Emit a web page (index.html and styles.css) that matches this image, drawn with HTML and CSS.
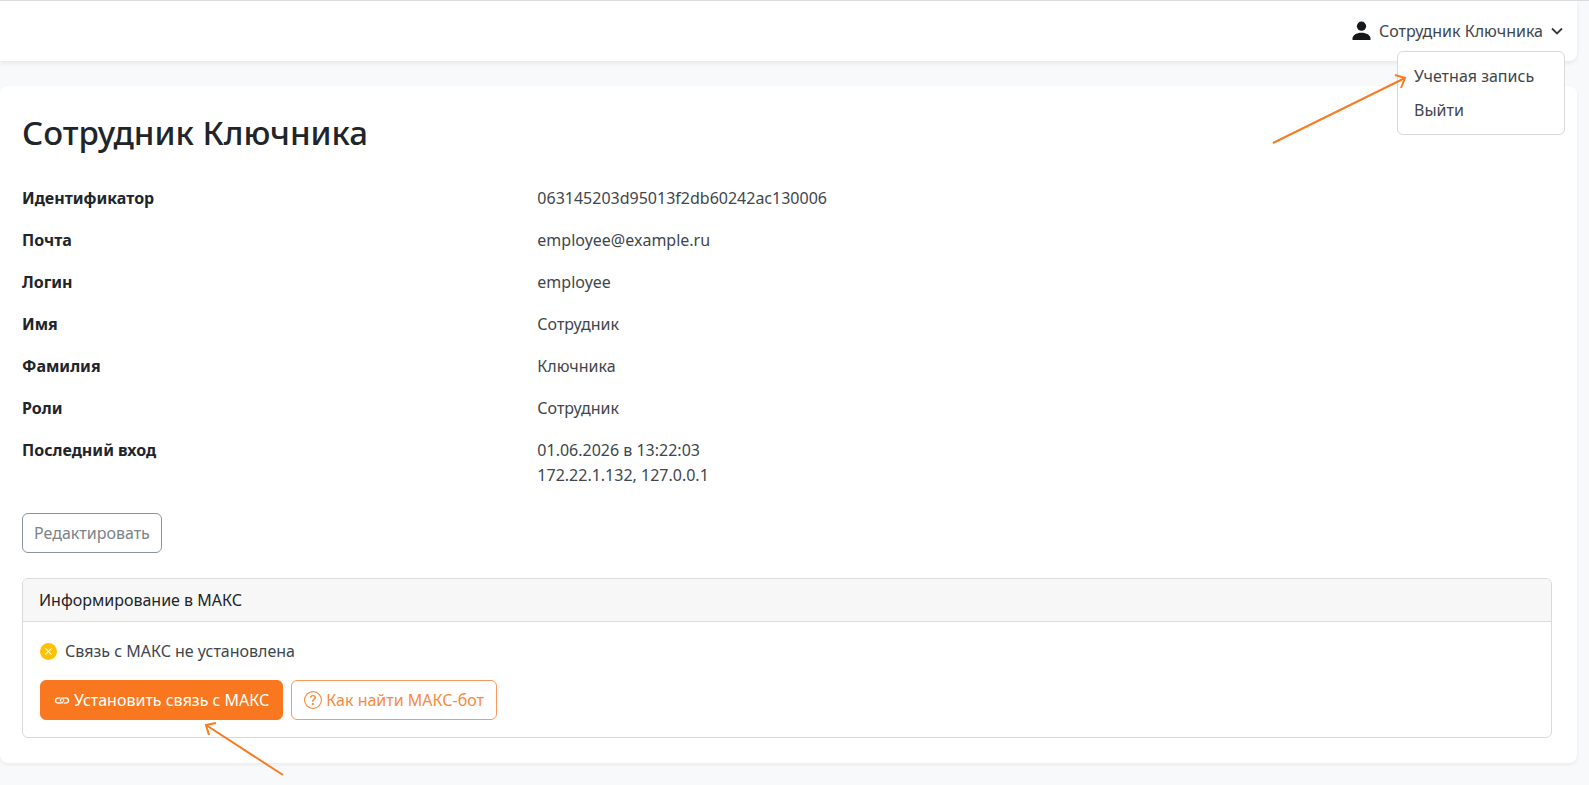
FILE: index.html
```html
<!DOCTYPE html>
<html lang="ru">
<head>
<meta charset="utf-8">
<title>Сотрудник Ключника</title>
<link rel="stylesheet" href="styles.css">
</head>
<body>
<header class="topbar">
  <div class="user-menu">
    <button class="user-toggle" type="button" aria-expanded="true">
      <svg class="user-icon" viewBox="0 0 18 20" aria-hidden="true"><circle cx="9" cy="5.2" r="4.6"/><path d="M0 19v-1.6c0-3.2 4.2-5.6 9-5.6s9 2.400 9 5.600V19z"/></svg>
      <span>Сотрудник Ключника</span>
      <svg class="chevron" viewBox="0 0 12 12" aria-hidden="true"><path d="M1 3.500l5 5 5-5"/></svg>
    </button>
    <nav class="menu">
      <a class="menu-item" href="#">Учетная запись</a>
      <a class="menu-item" href="#">Выйти</a>
    </nav>
    <svg class="arrow arrow-account" viewBox="0 0 136 72" aria-hidden="true"><path d="M2 69L134 4M124 1l10 3-4 10"/></svg>
  </div>
</header>
<main class="panel">
  <h1 class="title">Сотрудник Ключника</h1>
  <dl class="details">
    <dt>Идентификатор</dt><dd>063145203d95013f2db60242ac130006</dd>
    <dt>Почта</dt><dd>employee@example.ru</dd>
    <dt>Логин</dt><dd>employee</dd>
    <dt>Имя</dt><dd>Сотрудник</dd>
    <dt>Фамилия</dt><dd>Ключника</dd>
    <dt>Роли</dt><dd>Сотрудник</dd>
    <dt>Последний вход</dt><dd>01.06.2026 в 13:22:03<br>172.22.1.132, 127.0.0.1</dd>
  </dl>
  <button class="btn btn-secondary" type="button">Редактировать</button>
  <section class="card">
    <h2 class="card-header">Информирование в МАКС</h2>
    <div class="card-body">
      <p class="status">
        <svg class="status-icon" viewBox="0 0 16 16" aria-hidden="true"><circle cx="8" cy="8" r="8"/><path d="M5 5l6 6M11 5l-6 6"/></svg>
        Связь с МАКС не установлена
      </p>
      <div class="actions">
        <div class="link-action">
          <button class="btn btn-primary" type="button">
            <svg class="link-icon" viewBox="0 0 16 16" aria-hidden="true"><path d="M6.354 5.500H4a3 3 0 0 0 0 6h3a3 3 0 0 0 2.830-4H9q-.13 0-.25.031A2 2 0 0 1 7 10.500H4a2 2 0 1 1 0-4h1.535c.218-.376.495-.714.820-1z"/><path d="M9 5.500a3 3 0 0 0-2.830 4h1.098A2 2 0 0 1 9 6.500h3a2 2 0 1 1 0 4h-1.535a4 4 0 0 1-.820 1H12a3 3 0 1 0 0-6z"/></svg>
            Установить связь с МАКС
          </button>
          <svg class="arrow arrow-link" viewBox="0 0 82 56" aria-hidden="true"><path d="M80 53L3 3M13 1L3 3l3 10"/></svg>
        </div>
        <button class="btn btn-outline" type="button">
          <svg class="help-icon" viewBox="0 0 16 16" aria-hidden="true"><path fill-rule="evenodd" d="M8 15A7 7 0 1 1 8 1a7 7 0 0 1 0 14m0 1A8 8 0 1 0 8 0a8 8 0 0 0 0 16"/><path d="M5.255 5.786a.237.237 0 0 0 .241.247h.825c.138 0 .248-.113.266-.25.090-.656.540-1.134 1.342-1.134.686 0 1.314.343 1.314 1.168 0 .635-.374.927-.965 1.371-.673.489-1.206 1.060-1.168 1.987l.003.217a.25.25 0 0 0 .25.246h.811a.25.25 0 0 0 .25-.25v-.105c0-.718.273-.927 1.010-1.486.609-.463 1.244-.977 1.244-2.056 0-1.511-1.276-2.241-2.673-2.241-1.267 0-2.655.590-2.750 2.286m1.557 5.763c0 .533.425.927 1.010.927.609 0 1.028-.394 1.028-.927 0-.552-.420-.940-1.029-.940-.584 0-1.009.388-1.009.940"/></svg>
          Как найти МАКС-бот
        </button>
      </div>
    </div>
  </section>
</main>
</body>
</html>
```
FILE: styles.css
```css
* {
  box-sizing: border-box;
}

body {
  min-height: 100vh;
  margin: 0;
  padding-right: 12px;
  border-top: 1px solid #d9dbde;
  background: #f7f9fb;
  color: #212529;
  font: 16px/25px "Noto Sans", "Open Sans", sans-serif;
}

.topbar {
  display: flex;
  justify-content: flex-end;
  align-items: center;
  height: 60px;
  padding-right: 14px;
  background: #fff;
  border-radius: 0 0 8px 0;
  box-shadow: 0 2px 4px rgba(0, 0, 0, 0.08);
}

.user-menu {
  position: relative;
}

.user-toggle {
  display: flex;
  align-items: center;
  gap: 8px;
  padding: 0;
  border: 0;
  background: none;
  color: #40464c;
  font: inherit;
}

.user-icon {
  width: 19px;
  height: 20px;
  fill: #16191c;
}

.chevron {
  width: 12px;
  height: 12px;
  fill: none;
  stroke: #343a40;
  stroke-width: 1.8;
}

.menu {
  position: absolute;
  top: 32px;
  right: -2px;
  z-index: 1;
  width: 168px;
  padding: 8px 0 6px;
  background: #fff;
  border: 1px solid #d8d9da;
  border-radius: 6px;
}

.menu-item {
  display: block;
  padding: 4px 16px 5px;
  color: #40464c;
  text-decoration: none;
  white-space: nowrap;
}

.arrow {
  position: absolute;
  fill: none;
  stroke: #f97b22;
  stroke-width: 2;
}

.arrow-account {
  top: 55px;
  right: 156px;
  z-index: 2;
  width: 136px;
  height: 72px;
}

.panel {
  margin-top: 25px;
  padding: 27px 25px 25px 22px;
  background: #fff;
  border-radius: 8px;
  box-shadow: 0 2px 4px rgba(0, 0, 0, 0.06);
}

.title {
  margin: 0 0 33px;
  font-size: 33px;
  font-weight: 500;
  line-height: 40px;
}

.details {
  display: grid;
  grid-template-columns: 1fr 2fr;
  gap: 17px 8px;
  margin: 0 0 25px;
}

.details dt {
  font-weight: 700;
}

.details dd {
  margin: 0;
  color: #40464c;
}

.btn {
  display: inline-flex;
  align-items: center;
  justify-content: center;
  gap: 4px;
  height: 40px;
  padding: 0 13px;
  border: 1px solid;
  border-radius: 6px;
  background: #fff;
  font: inherit;
  white-space: nowrap;
}

.btn-secondary {
  padding: 0 11px;
  border-color: #8c949b;
  color: #7b838a;
}

.btn-primary {
  border-color: #f9771e;
  background: #f9771e;
  color: #fff;
}

.btn-outline {
  padding: 0 12px;
  border-color: #fa985a;
  color: #f98a40;
}

.link-icon {
  width: 16px;
  height: 16px;
  fill: currentColor;
  stroke: currentColor;
  stroke-width: 0.3;
}

.help-icon {
  width: 18px;
  height: 18px;
  fill: currentColor;
}

.card {
  margin-top: 25px;
  border: 1px solid #d9dadb;
  border-radius: 6px;
}

.card-header {
  margin: 0;
  padding: 9px 16px 8px;
  border-bottom: 1px solid #d9dadb;
  border-radius: 5px 5px 0 0;
  background: #f7f7f7;
  font-size: 16px;
  font-weight: 400;
}

.card-body {
  padding: 17px;
}

.status {
  display: flex;
  align-items: center;
  gap: 8px;
  margin: 0 0 16px;
  color: #40464c;
}

.status-icon {
  width: 17px;
  height: 17px;
  fill: #ffc107;
  stroke: #fff;
}

.status-icon circle {
  stroke: none;
}

.actions {
  display: flex;
  gap: 8px;
}

.link-action {
  position: relative;
}

.arrow-link {
  top: 42px;
  right: -2px;
  z-index: 1;
  width: 82px;
  height: 56px;
}
```
